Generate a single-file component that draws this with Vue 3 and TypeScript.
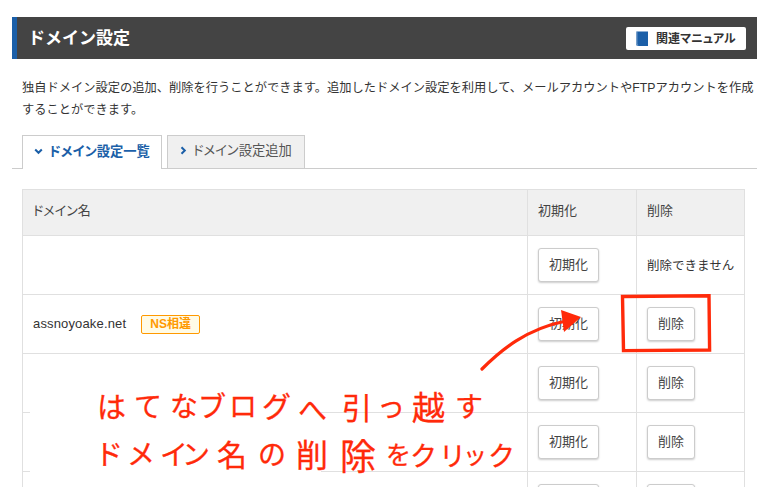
<script setup lang="ts">
interface Row {
  domain: string
  badge: string
  deletable: boolean
}
interface Glyph {
  c: string
  x: number
  y: number
  s: number
}
const rows: Row[] = [
  { domain: '', badge: '', deletable: false },
  { domain: 'assnoyoake.net', badge: 'NS相違', deletable: true },
  { domain: '', badge: '', deletable: true },
  { domain: '', badge: '', deletable: true },
  { domain: '', badge: '', deletable: true },
]
const glyphs: Glyph[] = [
  { c: 'は', x: 97, y: 391, s: 29 },
  { c: 'て', x: 134, y: 391, s: 28 },
  { c: 'な', x: 170, y: 391, s: 28 },
  { c: 'ブ', x: 198, y: 391, s: 28 },
  { c: 'ロ', x: 229, y: 391, s: 28 },
  { c: 'グ', x: 262, y: 391, s: 29 },
  { c: 'へ', x: 298, y: 394, s: 29 },
  { c: '引', x: 342, y: 391, s: 30 },
  { c: 'っ', x: 377, y: 391, s: 28 },
  { c: '越', x: 412, y: 390, s: 33 },
  { c: 'す', x: 455, y: 391, s: 28 },
  { c: 'ド', x: 95, y: 439, s: 28 },
  { c: 'メ', x: 127, y: 439, s: 28 },
  { c: 'イ', x: 160, y: 439, s: 28 },
  { c: 'ン', x: 182, y: 439, s: 28 },
  { c: '名', x: 217, y: 438, s: 30 },
  { c: 'の', x: 258, y: 439, s: 28 },
  { c: '削', x: 296, y: 437, s: 32 },
  { c: '除', x: 340, y: 436, s: 36 },
  { c: 'を', x: 386, y: 441, s: 25 },
  { c: 'ク', x: 410, y: 441, s: 27 },
  { c: 'リ', x: 439, y: 441, s: 27 },
  { c: 'ッ', x: 463, y: 442, s: 24 },
  { c: 'ク', x: 488, y: 441, s: 27 },
]
</script>

<template>
  <div class="page">
    <header class="bar">
      <h1 class="title">ドメイン設定</h1>
      <a class="manual">
        <svg class="book" width="12" height="15" viewBox="0 0 12 15">
          <path d="M1 0.5H12V15H2.2C1 15 0 14.3 0 13.2V1.5C0 1 .4 .5 1 .5Z" fill="#1b5fa8" />
          <path d="M0.8 1V13.4C0.8 14 1.4 14.3 2.2 14.3" fill="none" stroke="#bcd0e6" stroke-width="0.8" />
        </svg>
        <span>関連マニュアル</span>
      </a>
    </header>

    <p class="lead">独自ドメイン設定の追加、削除を行うことができます。追加したドメイン設定を利用して、メールアカウントやFTPアカウントを作成することができます。</p>

    <nav class="tabs">
      <div class="tab active">
        <svg width="9" height="7" viewBox="0 0 9 7"><path d="M1.2 1.5L4.5 4.8L7.8 1.5" fill="none" stroke="#1b5fa8" stroke-width="2" /></svg>
        <span>ドメイン設定一覧</span>
      </div>
      <div class="tab">
        <svg width="7" height="9" viewBox="0 0 7 9"><path d="M1.5 1.2L4.8 4.5L1.5 7.8" fill="none" stroke="#1b5fa8" stroke-width="2" /></svg>
        <span>ドメイン設定追加</span>
      </div>
    </nav>

    <table class="table">
      <colgroup>
        <col class="c1" />
        <col class="c2" />
        <col class="c3" />
      </colgroup>
      <thead>
        <tr>
          <th>ドメイン名</th>
          <th>初期化</th>
          <th>削除</th>
        </tr>
      </thead>
      <tbody>
        <tr v-for="(r, i) in rows" :key="i">
          <td class="name">
            <span v-if="r.domain" class="domain">{{ r.domain }}</span>
            <span v-if="r.badge" class="badge">{{ r.badge }}</span>
          </td>
          <td><button class="btn">初期化</button></td>
          <td>
            <button v-if="r.deletable" class="btn">削除</button>
            <span v-else class="no">削除できません</span>
          </td>
        </tr>
      </tbody>
    </table>

    <div class="patch"></div>
    <svg class="ink" width="777" height="487" viewBox="0 0 777 487">
      <path d="M622.5 296.5L709 295.8L709.6 350L623.5 350.6Z" fill="none" stroke="#ff2a0a" stroke-width="3.4" />
      <path d="M482 369C501 350 526 329 566 321" fill="none" stroke="#ff2a0a" stroke-width="3.2" stroke-linecap="round" />
      <path d="M561 310L581 317L564 332Z" fill="#ff2a0a" />
    </svg>
    <span
      v-for="(g, i) in glyphs"
      :key="i"
      class="hand"
      :style="{ left: g.x + 'px', top: g.y + 'px', fontSize: g.s + 'px' }"
    >{{ g.c }}</span>
  </div>
</template>

<style>
html, body { overflow: hidden; background: #fff; }
</style>

<style scoped>
.page {
  position: relative;
  width: 777px;
  height: 487px;
  overflow: hidden;
  padding: 17px 20px 0 12px;
  box-sizing: border-box;
  font-family: "Noto Sans CJK JP", "Liberation Sans", sans-serif;
  color: #333;
  background: #fff;
}
.bar {
  height: 42px;
  background: #444;
  border-left: 5px solid #1b5fa8;
  display: flex;
  align-items: center;
  justify-content: space-between;
  padding: 0 11px 0 11px;
}
.title {
  margin: 0 0 4px;
  color: #fff;
  font-size: 17px;
  font-weight: 700;
}
.manual {
  width: 120px;
  height: 23px;
  box-sizing: border-box;
  background: #fff;
  border-radius: 2px;
  display: flex;
  align-items: center;
  gap: 8px;
  padding-left: 10px;
  font-size: 12px;
  font-weight: 700;
  color: #333;
  font-feature-settings: "palt";
}
.manual span { margin-bottom: 2px; }
.lead {
  margin: 18px 0 0 10px;
  font-family: "Liberation Sans", "Noto Sans CJK JP", sans-serif;
  font-size: 12.25px;
  line-height: 22px;
  height: 44px;
  width: 735px;
  color: #333;
}
.tabs {
  margin-top: 14px;
  height: 34px;
  box-sizing: border-box;
  border-bottom: 1px solid #ccc;
  padding-left: 10px;
  display: flex;
  gap: 5px;
}
.tab {
  box-sizing: border-box;
  width: 138px;
  height: 33px;
  background: #f0f0f0;
  border: 1px solid #ccc;
  border-bottom: 0;
  display: flex;
  align-items: center;
  gap: 6px;
  padding-left: 12px;
  padding-bottom: 5px;
  font-size: 13.3px;
  color: #555;
  font-feature-settings: "palt";
}
.tab svg { margin-top: 2px; }
.tab.active {
  width: 140px;
  height: 34px;
  background: #fff;
  color: #1b5fa8;
  font-weight: 700;
  padding-left: 11px;
}
.table {
  margin: 20px 0 0 10px;
  width: 722px;
  table-layout: fixed;
  border-collapse: collapse;
  font-size: 13px;
}
.c1 { width: 505px; }
.c2 { width: 109px; }
.c3 { width: 108px; }
th, td {
  border: 1px solid #e0e0e0;
  padding: 0 0 0 10px;
  text-align: left;
}
th {
  height: 46px;
  box-sizing: border-box;
  padding-bottom: 6px;
  background: #f0f0f0;
  font-weight: 400;
  color: #444;
  font-feature-settings: "palt";
}
td { height: 59px; box-sizing: border-box; }
.name {
  font-family: "Liberation Sans", "Noto Sans CJK JP", sans-serif;
  color: #333;
}
.domain { letter-spacing: 0.15px; }
.badge {
  display: inline-block;
  margin-left: 15px;
  width: 59px;
  height: 19px;
  line-height: 17px;
  box-sizing: border-box;
  text-align: center;
  border: 1px solid #f90;
  border-radius: 2px;
  background: #fffbe6;
  color: #f90;
  font-size: 12px;
  font-weight: 700;
  vertical-align: middle;
}
.btn {
  height: 34px;
  padding: 0 10px 3px;
  font: inherit;
  color: #444;
  background: #fff;
  border: 1px solid #ccc;
  border-radius: 3px;
  box-shadow: 0 1px 2px rgba(0, 0, 0, 0.2);
  display: block;
}
.no {
  font-size: 12.5px;
  display: block;
  margin-bottom: 2px;
}
.patch {
  position: absolute;
  left: 30px;
  top: 354px;
  width: 291px;
  height: 133px;
  background: #fff;
}
.ink {
  position: absolute;
  left: 0;
  top: 0;
}
.hand {
  position: absolute;
  color: #ff2a0a;
  font-family: "Noto Sans CJK JP", sans-serif;
  font-weight: 400;
  white-space: nowrap;
  line-height: 1;
  -webkit-text-stroke: 0.3px #ff2a0a;
}
</style>
